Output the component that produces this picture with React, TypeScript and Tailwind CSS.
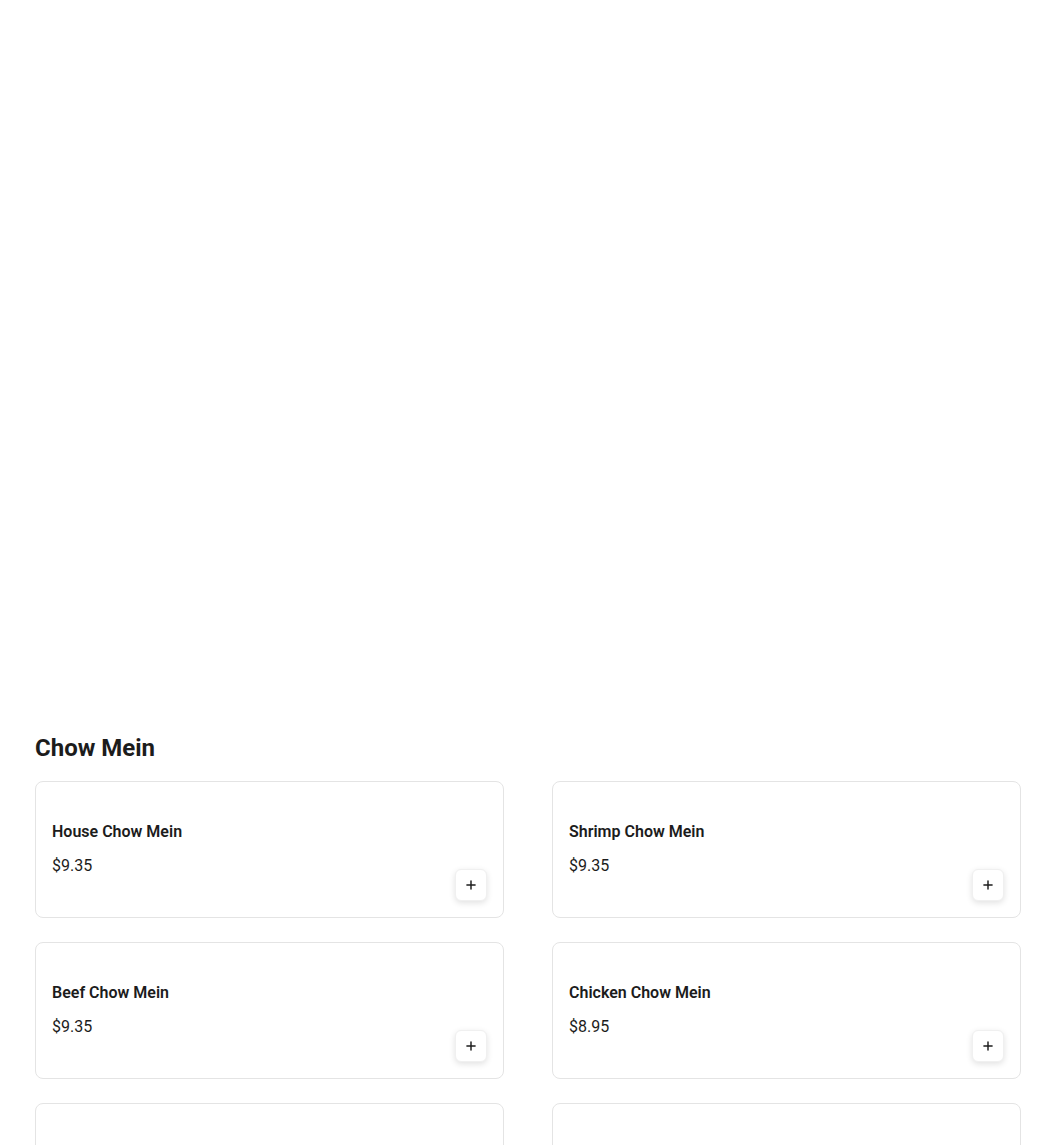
import { Plus } from 'lucide-react';

const ITEMS = [
  { id: 1, name: 'House Chow Mein', price: '$9.35' },
  { id: 2, name: 'Shrimp Chow Mein', price: '$9.35' },
  { id: 3, name: 'Beef Chow Mein', price: '$9.35' },
  { id: 4, name: 'Chicken Chow Mein', price: '$8.95' },
  { id: 5, name: 'Pork Chow Mein', price: '$8.95' },
  { id: 6, name: 'Vegetable Chow Mein', price: '$8.55' },
];

function MenuCard({ name, price }: { name: string; price: string }) {
  return (
    <div className="flex items-end justify-between rounded-lg border border-[#e4e4e4] bg-white px-4 pb-4 pt-[40px]">
      <div className="flex flex-col pb-[23px]">
        <h3 className="text-base leading-5 font-semibold text-[#1c1c1c]">{name}</h3>
        <p className="mt-3 text-base leading-6 text-[#1c1c1c]">{price}</p>
      </div>
      <button className="flex h-8 w-8 items-center justify-center rounded-md border border-[#f0f0f0] bg-white shadow-[0_2px_6px_rgba(0,0,0,0.12)]">
        <Plus size={14} strokeWidth={2.5} className="text-[#1c1c1c]" />
      </button>
    </div>
  );
}

export default function App() {
  return (
    <div className="min-h-screen bg-white font-['Roboto',sans-serif]">
      <div className="h-[732px]" />
      <section className="pb-10 pl-[35px] pr-[29px]">
        <h2 className="text-2xl font-bold leading-8 text-[#1c1c1c]">Chow Mein</h2>
        <div className="mt-[17px] grid grid-cols-2 gap-x-[48px] gap-y-[24px]">
          {ITEMS.map((item) => (
            <MenuCard key={item.id} name={item.name} price={item.price} />
          ))}
        </div>
      </section>
    </div>
  );
}
